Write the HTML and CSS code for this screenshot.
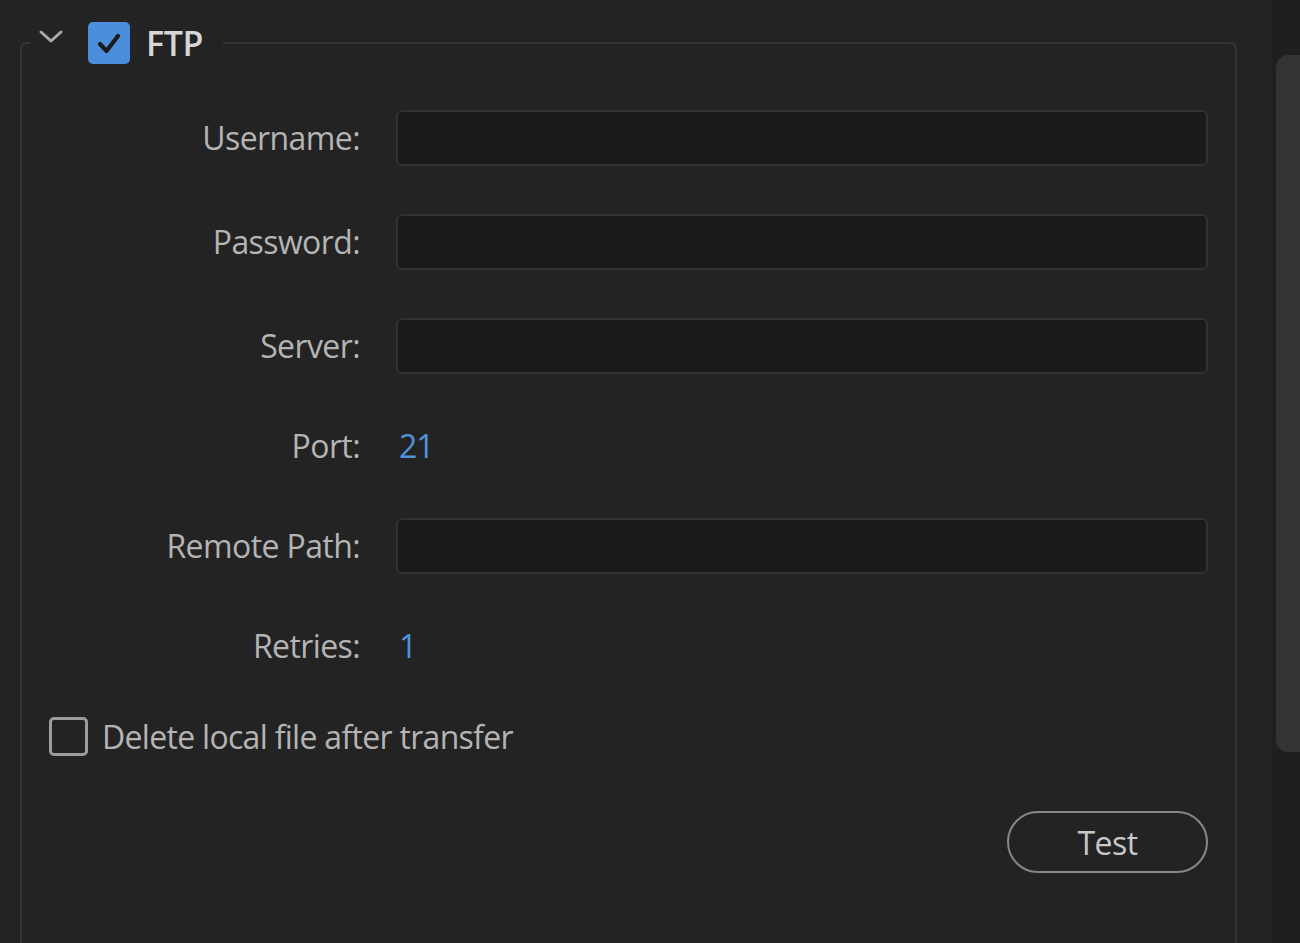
FILE: index.html
```html
<!DOCTYPE html>
<html lang="en">
<head>
<meta charset="utf-8">
<title>FTP</title>
<link rel="stylesheet" href="styles.css">
</head>
<body>
<div class="panel">
  <main class="content">
    <fieldset class="group">
      <legend class="group-head">
        <svg class="chevron" width="26" height="16" viewBox="0 0 26 16"><path d="M3 3 L13 12 L23 3" fill="none" stroke="#a9a9a9" stroke-width="3" stroke-linecap="round" stroke-linejoin="round"/></svg>
        <span class="check on">
          <svg width="42" height="42" viewBox="0 0 42 42"><path d="M12 22 L18.5 29 L30 14" fill="none" stroke="#1b1b1b" stroke-width="4.2" stroke-linecap="round" stroke-linejoin="round"/></svg>
        </span>
        <span class="group-title">FTP</span>
      </legend>

      <div class="form">
        <label class="lbl">Username:</label>
        <div class="input"></div>
        <label class="lbl">Password:</label>
        <div class="input"></div>
        <label class="lbl">Server:</label>
        <div class="input"></div>
        <label class="lbl">Port:</label>
        <div class="value">21</div>
        <label class="lbl">Remote Path:</label>
        <div class="input"></div>
        <label class="lbl">Retries:</label>
        <div class="value">1</div>
      </div>

      <div class="option">
        <span class="check off"></span>
        <span class="option-text">Delete local file after transfer</span>
      </div>

      <div class="actions">
        <button class="btn">Test</button>
      </div>
    </fieldset>
  </main>
  <div class="scroll-track"><div class="scroll-thumb"></div></div>
</div>
</body>
</html>
```

FILE: styles.css
```css
html, body {
  margin: 0;
  padding: 0;
  height: 100%;
  overflow: hidden;
  background: #232323;
}

body {
  font-family: "Open Sans", "Liberation Sans", sans-serif;
  color: #b9b9b9;
}

.panel {
  display: flex;
  height: 943px;
  overflow: hidden;
}

.content {
  flex: 1;
  padding: 22px 35px 0 20px;
  min-width: 0;
  overflow: hidden;
}

.group {
  margin: 0;
  padding: 46px 27px 0 0;
  border: 2px solid #353535;
  border-radius: 7px;
  height: 960px;
  box-sizing: border-box;
}

.group-head {
  display: flex;
  align-items: center;
  margin-left: 8px;
  padding: 0 20px 0 8px;
  height: 42px;
}

.chevron {
  display: block;
  margin-top: -12px;
}

.check {
  display: inline-block;
  box-sizing: border-box;
  flex: none;
}

.check.on {
  width: 42px;
  height: 42px;
  margin-left: 24px;
  background: #4b8fdc;
  border-radius: 5px;
}

.check.on svg {
  display: block;
}

.group-title {
  margin-left: 16px;
  font-size: 34px;
  font-weight: 600;
  color: #d6d6d6;
  letter-spacing: -0.4px;
}

.form {
  display: grid;
  grid-template-columns: 338px 1fr;
  grid-template-rows: 56px 56px 56px 48px 56px 48px;
  column-gap: 36px;
  row-gap: 48px;
  align-items: center;
}

.lbl {
  text-align: right;
  font-size: 32px;
  font-weight: 500;
  letter-spacing: -0.6px;
  color: #b4b4b4;
  line-height: 1;
}

.input {
  height: 56px;
  box-sizing: border-box;
  background: #1a1a1a;
  border: 2px solid #303030;
  border-radius: 6px;
}

.value {
  font-size: 32px;
  font-weight: 500;
  letter-spacing: -1px;
  color: #4f93db;
  padding-left: 3px;
  line-height: 1;
}

.option {
  display: flex;
  align-items: center;
  margin: 46px 0 0 27px;
  height: 40px;
}

.check.off {
  width: 39px;
  height: 39px;
  border: 3px solid #9c9c9c;
  border-radius: 5px;
}

.option-text {
  margin-left: 14px;
  font-size: 32px;
  font-weight: 500;
  letter-spacing: -0.7px;
  color: #b4b4b4;
}

.actions {
  display: flex;
  justify-content: flex-end;
  margin-top: 55px;
}

.btn {
  width: 201px;
  height: 62px;
  background: transparent;
  border: 2px solid #878787;
  border-radius: 31px;
  font-family: "Open Sans", "Liberation Sans", sans-serif;
  font-size: 32px;
  font-weight: 500;
  letter-spacing: -0.5px;
  color: #c8c8c8;
  padding: 0;
}

.scroll-track {
  width: 28px;
  flex: none;
  background: #1f1f1f;
  overflow: hidden;
}

.scroll-thumb {
  margin: 55px 0 0 4px;
  width: 36px;
  height: 697px;
  background: #333333;
  border-radius: 12px;
}
```
